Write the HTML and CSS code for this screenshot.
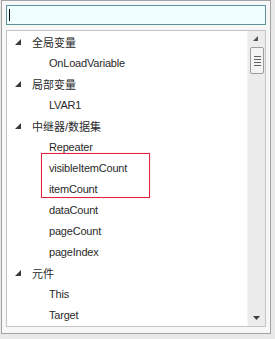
FILE: index.html
```html
<!DOCTYPE html>
<html lang="en">
<head>
    <meta charset="UTF-8">
    <title>Variables</title>
    <link rel="stylesheet" href="styles.css">
</head>
<body>
    <div class="popup">
        <div class="search"><span class="caret"></span></div>
        <div class="list">
            <div class="tree">
                <div class="row group"><svg class="arrow" width="6" height="6" viewBox="0 0 6 6"><polygon points="6,0 6,6 0,6"/></svg>全局变量</div>
                <div class="row item">OnLoadVariable</div>
                <div class="row group"><svg class="arrow" width="6" height="6" viewBox="0 0 6 6"><polygon points="6,0 6,6 0,6"/></svg>局部变量</div>
                <div class="row item">LVAR1</div>
                <div class="row group"><svg class="arrow" width="6" height="6" viewBox="0 0 6 6"><polygon points="6,0 6,6 0,6"/></svg>中继器/数据集</div>
                <div class="row item">Repeater</div>
                <div class="row item">visibleItemCount</div>
                <div class="row item">itemCount</div>
                <div class="row item">dataCount</div>
                <div class="row item">pageCount</div>
                <div class="row item">pageIndex</div>
                <div class="row group"><svg class="arrow" width="6" height="6" viewBox="0 0 6 6"><polygon points="6,0 6,6 0,6"/></svg>元件</div>
                <div class="row item">This</div>
                <div class="row item">Target</div>
                <div class="mark"></div>
            </div>
            <div class="scrollbar">
                <svg class="btn" width="17" height="16" viewBox="0 0 17 16"><polygon points="10,5 10,10 5,10" fill="#505050"/></svg>
                <div class="thumb">
                    <span></span><span></span><span></span><span></span>
                </div>
                <div class="track"></div>
                <svg class="btn" width="17" height="16" viewBox="0 0 17 16"><polygon points="5,6 12,6 8.5,10" fill="#404040"/></svg>
            </div>
        </div>
    </div>
</body>
</html>
```

FILE: styles.css
```css
body{
    margin:0;
    background:#e9e9e9;
    font-family:"Liberation Sans", "Noto Sans CJK SC", sans-serif;
    font-size:11px;
    color:#2a2a2a;
}
.popup{
    box-sizing:border-box;
    width:270px;
    height:334px;
    margin-left:1px;
    border:1px solid #a3a3a3;
    background:#f7f7f7;
    padding:4px 4px 6px 4px;
}
.search{
    box-sizing:border-box;
    height:20px;
    border:1px solid #5e949e;
    background:#effefe;
    padding:3px 2px;
}
.caret{
    display:block;
    width:1px;
    height:12px;
    background:#000;
}
.list{
    box-sizing:border-box;
    height:297px;
    margin-top:5px;
    border:1px solid #c4c4c4;
    background:#fff;
    display:flex;
}
.tree{
    flex:1;
    position:relative;
}
.row{
    height:21px;
    display:flex;
    align-items:center;
    white-space:nowrap;
}
.group{
    padding-left:8px;
}
.arrow{
    fill:#3a3a3a;
    margin-right:11px;
    margin-top:1px;
}
.item{
    padding-left:42px;
    letter-spacing:-0.2px;
}
.mark{
    position:absolute;
    left:34px;
    top:122px;
    width:107px;
    height:43px;
    border:1px solid #e8203f;
    box-shadow:0 0 1px rgba(232, 32, 63, 0.35);
}
.scrollbar{
    width:17px;
    background:#ececec;
    border-left:1px solid #f6f6f6;
    display:flex;
    flex-direction:column;
}
.btn{
    display:block;
}
.thumb{
    box-sizing:border-box;
    height:27px;
    margin:0 1px 0 2px;
    border:1px solid #9c9c9c;
    border-radius:2px;
    background:#f4f4f4;
    display:flex;
    flex-direction:column;
    align-items:center;
    justify-content:center;
    gap:2px;
}
.thumb span{
    display:block;
    width:7px;
    height:1px;
    background:#606060;
}
.track{
    flex:1;
}
```
